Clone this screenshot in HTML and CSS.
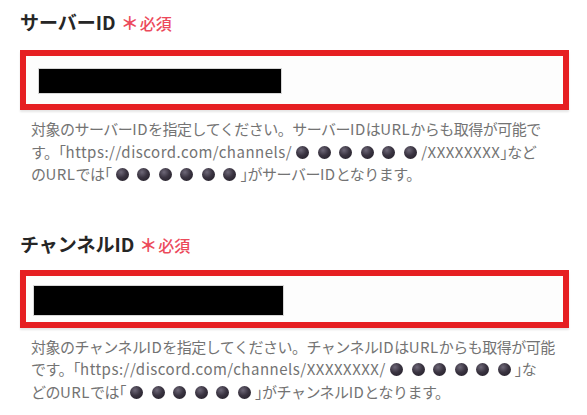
FILE: index.html
```html
<!DOCTYPE html>
<html lang="ja">
<head>
    <meta charset="UTF-8">
    <meta name="viewport" content="width=device-width, initial-scale=1.0">
    <title>Discord設定</title>
    <link rel="stylesheet" href="styles.css">
</head>
<body>

    <div class="field field-server">
        <h2 class="label">サーバーID<span class="star">＊</span><span class="required">必須</span></h2>
        <div class="input-box">
            <div class="masked"></div>
        </div>
        <p class="help">
            対象のサーバー<span class="en">ID</span>を指定してください。サーバー<span class="en">ID</span>は<span class="en">URL</span>からも取得が可能で<br>
            す。<span class="br">「</span><span class="en">https://discord.com/channels/</span><span class="dot"></span><span class="dot"></span><span class="dot"></span><span class="dot"></span><span class="dot"></span><span class="dot"></span><span class="en">/XXXXXXXX</span><span class="br">」</span>など<br>
            の<span class="en">URL</span>では<span class="br">「</span><span class="dot"></span><span class="dot"></span><span class="dot"></span><span class="dot"></span><span class="dot"></span><span class="dot"></span><span class="br">」</span>がサーバー<span class="en">ID</span>となります。
        </p>
    </div>

    <div class="field field-channel">
        <h2 class="label">チャンネルID<span class="star">＊</span><span class="required">必須</span></h2>
        <div class="input-box">
            <div class="masked"></div>
        </div>
        <p class="help">
            対象のチャンネル<span class="en">ID</span>を指定してください。チャンネル<span class="en">ID</span>は<span class="en">URL</span>からも取得が可能<br>
            です。<span class="br">「</span><span class="en">https://discord.com/channels/XXXXXXXX/</span><span class="dot"></span><span class="dot"></span><span class="dot"></span><span class="dot"></span><span class="dot"></span><span class="dot"></span><span class="br">」</span>な<br>
            どの<span class="en">URL</span>では<span class="br">「</span><span class="dot"></span><span class="dot"></span><span class="dot"></span><span class="dot"></span><span class="dot"></span><span class="dot"></span><span class="br">」</span>がチャンネル<span class="en">ID</span>となります。
        </p>
    </div>

</body>
</html>
```

FILE: styles.css
```css
body {
    margin: 0;
    padding: 8px 0 0 20px;
    background-color: #ffffff;
    font-family: "Noto Sans CJK JP", "Noto Sans", sans-serif;
    color: #222222;
}
.field {
    width: 549px;
}
.field-channel {
    margin-top: 44px;
}
.label {
    margin: 0;
    font-size: 19px;
    font-weight: 700;
    line-height: 28px;
    color: #262626;
}
.star {
    display: inline-block;
    margin-left: 5px;
    font-size: 18px;
    font-weight: 700;
    color: #ec4a5b;
}
.required {
    margin-left: 1px;
    font-size: 16px;
    font-weight: 500;
    color: #ec4a5b;
}
.input-box {
    margin-top: 13px;
    border: 6px solid #e61f22;
    background-color: #fdfdfd;
    box-shadow: 0 2px 2px rgba(0, 0, 0, 0.1);
    padding: 12px 0 10px 12px;
}
.field-channel .input-box {
    margin-top: 11px;
    padding: 9px 0 6px 7px;
}
.masked {
    width: 244px;
    height: 26px;
    background-color: #000000;
    border: 1px solid #d6d6d6;
    box-sizing: border-box;
}
.field-channel .masked {
    width: 251px;
    height: 31px;
}
.help {
    margin: 8px 0 0 11px;
    font-size: 15px;
    line-height: 22.5px;
    letter-spacing: -0.5px;
    color: #737373;
    white-space: nowrap;
}
.help .en {
    letter-spacing: 0.5px;
}
.help .br {
    font-feature-settings: "halt";
}
.dot {
    display: inline-block;
    width: 13px;
    height: 13px;
    margin: 0 4.25px;
    border-radius: 50%;
    vertical-align: -1px;
    background: radial-gradient(circle at 38% 32%, #6e6878 0%, #3a3441 45%, #1e1a23 100%);
}
```
